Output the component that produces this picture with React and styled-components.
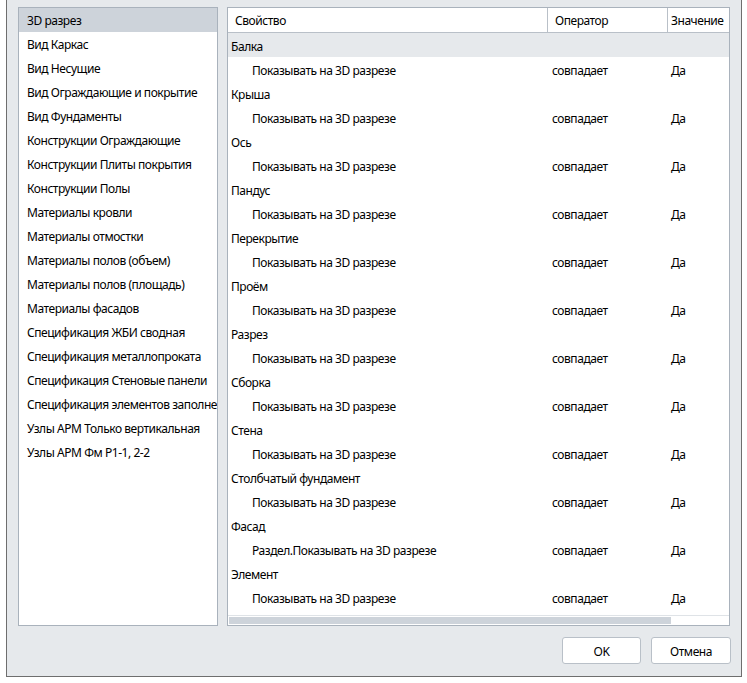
import React from "react";
import styled, { createGlobalStyle } from "styled-components";

const Global = createGlobalStyle`
  html, body { margin: 0; padding: 0; background: #ffffff; }
  body { font-family: "Noto Sans", "Open Sans", sans-serif; font-size: 12px; letter-spacing: -0.45px; color: #000; }
`;

const Window = styled.div`
  box-sizing: border-box;
  margin-left: 6px;
  width: 736px;
  height: 677px;
  border: 1px solid #6e6e6e;
  border-top: none;
  background: #e6e9ec;
  padding: 7px 11px 12px 11px;
  display: flex;
  flex-direction: column;
`;

const Panels = styled.div`
  display: flex;
  gap: 9px;
  height: 620px;
`;

const ListPanel = styled.div`
  box-sizing: border-box;
  width: 200px;
  border: 1px solid #a9b2bc;
  background: #fff;
  overflow: hidden;
`;

const ListItem = styled.div`
  height: 24px;
  line-height: 26px;
  padding-left: 8px;
  white-space: nowrap;
  overflow: hidden;
  background: ${(p) => (p.$selected ? "#cdd3da" : "transparent")};
`;

const TablePanel = styled.div`
  box-sizing: border-box;
  width: 503px;
  border: 1px solid #a9b2bc;
  background: #fff;
  display: flex;
  flex-direction: column;
  overflow: hidden;
`;

const cols = "319px 120px 1fr";

const HeaderRow = styled.div`
  display: grid;
  grid-template-columns: ${cols};
  height: 24px;
  border-bottom: 1px solid #b9c0c8;
  flex: none;
`;

const HeaderCell = styled.div`
  line-height: 26px;
  height: 24px;
  padding-left: ${(p) => p.$pad}px;
  white-space: nowrap;
  overflow: hidden;
  border-left: ${(p) => (p.$sep ? "1px solid #b9c0c8" : "none")};
`;

const Body = styled.div`
  flex: 1;
`;

const GroupRow = styled.div`
  height: 24px;
  line-height: 27px;
  overflow: hidden;
  padding-left: 3px;
  background: ${(p) => (p.$active ? "#e6e9ec" : "transparent")};
`;

const ItemRow = styled.div`
  display: grid;
  grid-template-columns: ${cols};
  height: 24px;
  line-height: 27px;
  overflow: hidden;
`;

const Cell = styled.div`
  white-space: nowrap;
  overflow: hidden;
  padding-left: ${(p) => p.$pad}px;
`;

const ScrollTrack = styled.div`
  flex: none;
  box-sizing: border-box;
  height: 10px;
  border-top: 1px solid #dfe3e7;
  padding: 1px;
`;

const ScrollThumb = styled.div`
  width: 442px;
  height: 7px;
  background: #cdd3da;
`;

const Footer = styled.div`
  display: flex;
  justify-content: flex-end;
  gap: 10px;
  margin-top: 11px;
  margin-right: -1px;
`;

const Button = styled.button`
  box-sizing: border-box;
  width: ${(p) => p.$w}px;
  height: 27px;
  border: 1px solid #b9c0c8;
  border-radius: 3px;
  background: #fff;
  font-family: inherit;
  font-size: 12px;
  letter-spacing: -0.45px;
  color: #000;
  padding: 2px 0 0 0;
`;

const listItems = [
  "3D разрез",
  "Вид Каркас",
  "Вид Несущие",
  "Вид Ограждающие и покрытие",
  "Вид Фундаменты",
  "Конструкции Ограждающие",
  "Конструкции Плиты покрытия",
  "Конструкции Полы",
  "Материалы кровли",
  "Материалы отмостки",
  "Материалы полов (объем)",
  "Материалы полов (площадь)",
  "Материалы фасадов",
  "Спецификация ЖБИ сводная",
  "Спецификация металлопроката",
  "Спецификация Стеновые панели",
  "Спецификация элементов заполнения",
  "Узлы АРМ Только вертикальная",
  "Узлы АРМ Фм Р1-1, 2-2",
];

const groups = [
  ["Балка", "Показывать на 3D разрезе"],
  ["Крыша", "Показывать на 3D разрезе"],
  ["Ось", "Показывать на 3D разрезе"],
  ["Пандус", "Показывать на 3D разрезе"],
  ["Перекрытие", "Показывать на 3D разрезе"],
  ["Проём", "Показывать на 3D разрезе"],
  ["Разрез", "Показывать на 3D разрезе"],
  ["Сборка", "Показывать на 3D разрезе"],
  ["Стена", "Показывать на 3D разрезе"],
  ["Столбчатый фундамент", "Показывать на 3D разрезе"],
  ["Фасад", "Раздел.Показывать на 3D разрезе"],
  ["Элемент", "Показывать на 3D разрезе"],
];

export default function App() {
  return (
    <>
      <Global />
      <Window>
        <Panels>
          <ListPanel>
            {listItems.map((t, i) => (
              <ListItem key={t} $selected={i === 0}>
                {t}
              </ListItem>
            ))}
          </ListPanel>
          <TablePanel>
            <HeaderRow>
              <HeaderCell $pad={7}>Свойство</HeaderCell>
              <HeaderCell $pad={7} $sep>
                Оператор
              </HeaderCell>
              <HeaderCell $pad={3} $sep>
                Значение
              </HeaderCell>
            </HeaderRow>
            <Body>
              {groups.map(([g, p], i) => (
                <React.Fragment key={g}>
                  <GroupRow $active={i === 0}>{g}</GroupRow>
                  <ItemRow>
                    <Cell $pad={24}>{p}</Cell>
                    <Cell $pad={5}>совпадает</Cell>
                    <Cell $pad={4}>Да</Cell>
                  </ItemRow>
                </React.Fragment>
              ))}
            </Body>
            <ScrollTrack>
              <ScrollThumb />
            </ScrollTrack>
          </TablePanel>
        </Panels>
        <Footer>
          <Button $w={79}>OK</Button>
          <Button $w={80}>Отмена</Button>
        </Footer>
      </Window>
    </>
  );
}
